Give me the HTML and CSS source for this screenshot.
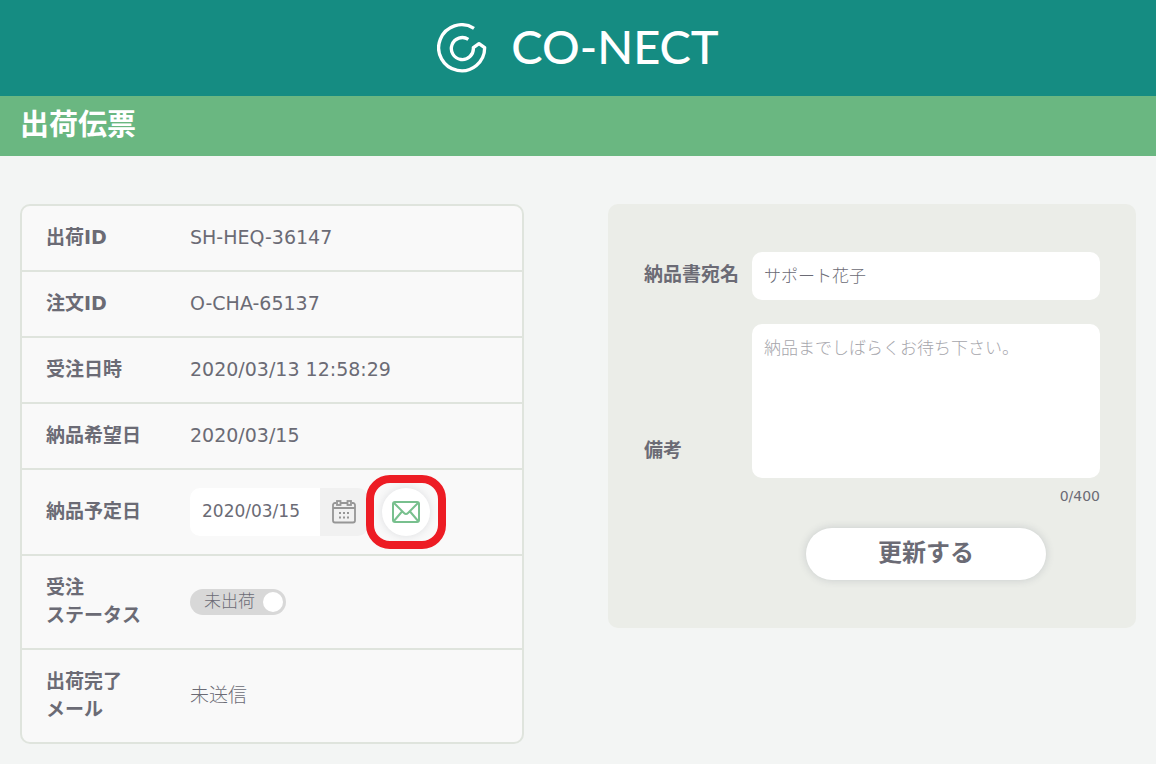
FILE: index.html
```html
<!DOCTYPE html>
<html lang="ja">
<head>
    <meta charset="UTF-8">
    <meta name="viewport" content="width=device-width, initial-scale=1.0">
    <title>出荷伝票 | CO-NECT</title>
    <link rel="stylesheet" href="styles.css">
</head>
<body>
    <header class="site-header">
        <a class="logo" href="#">
            <svg class="logo-mark" viewBox="0 0 150 150" aria-hidden="true">
                <path d="M111 16 A69 69 0 1 0 143 74 L126 62 L109 74 A33 33 0 1 1 94 49" fill="none" stroke="#fff" stroke-width="10" stroke-linejoin="round"/>
            </svg>
            <span class="logo-text">CO-NECT</span>
        </a>
    </header>
    <h1 class="page-title">出荷伝票</h1>
    <main class="content">
        <table class="details">
            <tbody>
                <tr>
                    <th scope="row">出荷ID</th>
                    <td>SH-HEQ-36147</td>
                </tr>
                <tr>
                    <th scope="row">注文ID</th>
                    <td>O-CHA-65137</td>
                </tr>
                <tr>
                    <th scope="row">受注日時</th>
                    <td>2020/03/13 12:58:29</td>
                </tr>
                <tr>
                    <th scope="row">納品希望日</th>
                    <td>2020/03/15</td>
                </tr>
                <tr>
                    <th scope="row"><label for="delivery-date">納品予定日</label></th>
                    <td class="date-cell">
                        <div class="date-row">
                            <div class="date-field">
                                <input type="text" id="delivery-date" value="2020/03/15">
                                <button type="button" class="btn-calendar" aria-label="カレンダー">
                                    <svg width="24" height="24" viewBox="0 0 24 24" fill="none" stroke="#969696" stroke-width="1.800" aria-hidden="true">
                                        <path d="M4 3H3a2 2 0 0 0-2 2v15.500a2 2 0 0 0 2 2h18a2 2 0 0 0 2-2V5a2 2 0 0 0-2-2h-1M9 3h6M1 8h22"/>
                                        <rect x="5" y="1" width="3.500" height="4"/>
                                        <rect x="15.500" y="1" width="3.500" height="4"/>
                                        <path d="M7 13h2M11 13h2M15 13h2M7 17.500h2M11 17.500h2M15 17.500h2" stroke-width="2"/>
                                    </svg>
                                </button>
                            </div>
                            <div class="mail-highlight">
                                <button type="button" class="btn-mail" aria-label="メール">
                                    <svg width="28" height="22" viewBox="0 0 28 22" fill="none" stroke="#78c08e" stroke-width="2" stroke-linejoin="round" aria-hidden="true">
                                        <rect x="1" y="1" width="26" height="20" rx="2"/>
                                        <path d="M1.500 1.500 L12 12 Q14 14 16 12 L26.500 1.500M1.500 20.500 L10 10.500M26.500 20.500 L18 10.500"/>
                                    </svg>
                                </button>
                            </div>
                        </div>
                    </td>
                </tr>
                <tr>
                    <th scope="row">受注<br>ステータス</th>
                    <td>
                        <label class="switch light">
                            <span>未出荷</span>
                            <input type="checkbox">
                        </label>
                    </td>
                </tr>
                <tr>
                    <th scope="row">出荷完了<br>メール</th>
                    <td class="light">未送信</td>
                </tr>
            </tbody>
        </table>
        <form class="note-form">
            <label for="addressee">納品書宛名</label>
            <input type="text" id="addressee" class="light" value="サポート花子">
            <label for="remarks" class="label-remarks">備考</label>
            <textarea id="remarks" class="light" maxlength="400" placeholder="納品までしばらくお待ち下さい。"></textarea>
            <p class="counter">0/400</p>
            <button type="button" class="btn-update">更新する</button>
        </form>
    </main>
</body>
</html>
```
FILE: styles.css
```css
* {
    box-sizing: border-box;
}
body {
    margin: 0;
    background-color: #f3f5f4;
    color: #6b6b75;
    font-family: "DejaVu Sans", "Noto Sans CJK JP", sans-serif;
    font-size: 19px;
    line-height: 28px;
}
button, input, textarea {
    font-family: inherit;
    color: inherit;
    border: none;
}
button {
    cursor: pointer;
}
.light {
    font-weight: 300;
}
.site-header {
    display: flex;
    align-items: center;
    justify-content: center;
    height: 96px;
    background-color: #158c82;
}
.logo {
    display: flex;
    align-items: center;
    gap: 24px;
    color: #fff;
    text-decoration: none;
}
.logo-mark {
    width: 50px;
    height: 50px;
}
.logo-text {
    padding-bottom: 4px;
    font-family: Lato, sans-serif;
    font-size: 47px;
    font-weight: 500;
    line-height: 48px;
}
.page-title {
    margin: 0;
    padding: 9px 20px 11px;
    background-color: #6ab781;
    color: #fff;
    font-size: 29px;
    line-height: 40px;
}
.content {
    display: grid;
    grid-template-columns: 21fr 22fr;
    align-items: start;
    gap: 84px;
    padding: 48px 20px 20px;
}

/* Shipment details */
.details {
    width: 100%;
    border: 2px solid #dfe4dd;
    border-radius: 10px;
    border-spacing: 0;
    background-color: #f9f9f9;
}
.details th, .details td {
    padding: 17px 0 19px;
    border-bottom: 2px solid #dfe4dd;
    text-align: left;
}
.details .date-cell {
    padding: 18px 0;
}
.details tr:last-child th, .details tr:last-child td {
    border-bottom: none;
}
.details th {
    width: 168px;
    padding-left: 24px;
}
.date-row {
    display: flex;
    gap: 14px;
}
.date-field {
    display: flex;
    height: 48px;
    border-radius: 10px;
    overflow: hidden;
}
.date-field input {
    width: 130px;
    padding: 0 12px 2px;
    background-color: #fff;
    font-size: 17px;
}
.btn-calendar {
    display: flex;
    align-items: center;
    justify-content: center;
    width: 48px;
    padding: 0;
    background-color: #f1f1f1;
}
.mail-highlight {
    position: relative;
}
.mail-highlight::after {
    content: "";
    position: absolute;
    inset: -13px -16px;
    border: 8px solid #ed1c24;
    border-radius: 24px;
    pointer-events: none;
}
.btn-mail {
    display: flex;
    align-items: center;
    justify-content: center;
    width: 48px;
    height: 48px;
    padding: 0;
    border-radius: 50%;
    background-color: #fff;
    box-shadow: 0 0 8px rgba(60, 70, 90, 0.15);
}
.switch {
    display: flex;
    align-items: center;
    justify-content: space-between;
    width: 96px;
    height: 26px;
    margin-top: 1px;
    padding: 0 3px 0 14px;
    border-radius: 13px;
    background-color: #d8d8d8;
    font-size: 17px;
    line-height: 24px;
    cursor: pointer;
}
.switch span {
    padding-bottom: 2px;
}
.switch input {
    appearance: none;
    width: 20px;
    height: 20px;
    margin: 0;
    border-radius: 50%;
    background-color: #fff;
}

/* Delivery note form */
.note-form {
    display: grid;
    grid-template-columns: 108px 1fr;
    align-items: center;
    padding: 48px 36px;
    border-radius: 10px;
    background-color: #ebede8;
}
.note-form label {
    padding-bottom: 4px;
    font-weight: bold;
}
.note-form input, .note-form textarea {
    width: 100%;
    border-radius: 10px;
    background-color: #fff;
    font-size: 17px;
}
.note-form input {
    height: 48px;
    padding: 0 12px 4px;
}
.note-form textarea {
    display: block;
    height: 154px;
    margin-top: 24px;
    padding: 10px 12px;
    line-height: 28px;
    resize: none;
}
.note-form textarea::placeholder {
    color: #a6a6ac;
}
.note-form .label-remarks {
    align-self: end;
    padding-bottom: 14px;
}
.counter {
    grid-column: 2;
    margin: 8px 0 22px;
    font-size: 14px;
    line-height: 20px;
    text-align: right;
}
.btn-update {
    grid-column: 2;
    justify-self: center;
    width: 240px;
    height: 52px;
    padding: 0 0 8px;
    border-radius: 26px;
    background-color: #fff;
    box-shadow: 0 0 8px rgba(60, 70, 90, 0.2);
    font-size: 24px;
    font-weight: bold;
}
```
